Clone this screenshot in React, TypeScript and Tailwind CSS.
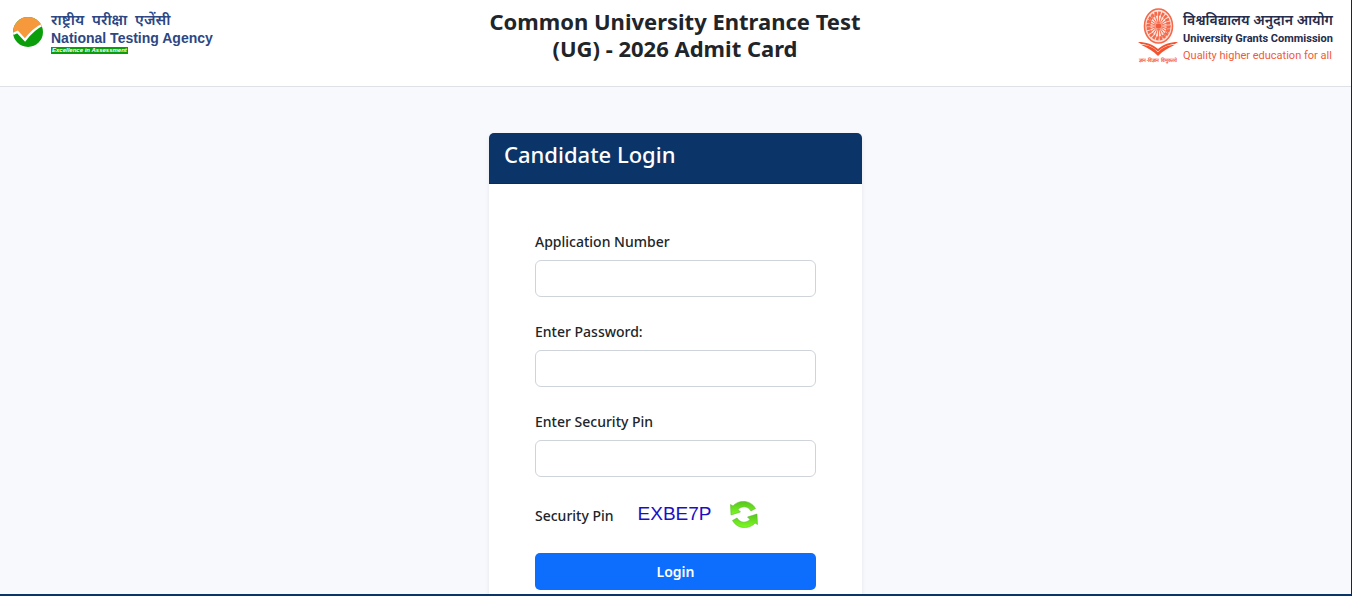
import { useState } from 'react';

const fields = [
  { id: 'applicationNumber', label: 'Application Number', type: 'text' },
  { id: 'password', label: 'Enter Password:', type: 'password' },
  { id: 'securityPin', label: 'Enter Security Pin', type: 'text' },
];

const spokes = Array.from({ length: 20 }, (_, i) => i * 18);

function NtaLogo() {
  return (
    <div className="flex items-start gap-2 font-['Liberation_Sans',sans-serif]">
      <svg className="mt-1 h-[30px] w-[30px] shrink-0" viewBox="0 0 30 30" aria-hidden="true">
        <defs>
          <clipPath id="ntaDisc">
            <circle cx="15" cy="15" r="15" />
          </clipPath>
        </defs>
        <g clipPath="url(#ntaDisc)">
          <path d="M0 0H30V30H0Z" fill="#0a9f0a" />
          <path d="M0 0H30V7.5C22 11 17 16.5 12 23L4.5 15L0 17Z" fill="#f6983c" />
          <path d="M0 17L4.5 15L12 23C17 16.5 22 11 30 7.5" fill="none" stroke="#fff" strokeWidth="2.4" />
        </g>
      </svg>
      <div className="flex flex-col items-start text-[#2c4784]">
        <span className="pt-px font-['Noto_Sans_Devanagari','Noto_Sans',sans-serif] text-[15px] leading-[16px] font-semibold whitespace-nowrap" lang="hi">
          राष्ट्रीय &nbsp;परीक्षा &nbsp;एजेंसी
        </span>
        <span className="text-[14px] leading-[16px] font-bold whitespace-nowrap">National Testing Agency</span>
        <span className="mt-px bg-[#0a9f0a] px-px text-[6px] leading-[7px] font-bold italic text-white">
          Excellence in Assessment
        </span>
      </div>
    </div>
  );
}

function UgcLogo() {
  return (
    <div className="flex items-start gap-[5px] font-[Roboto,sans-serif]">
      <svg className="h-[56px] w-10 shrink-0" viewBox="0 0 40 56" aria-hidden="true">
        <ellipse cx="20.5" cy="18" rx="14" ry="17" fill="#fde3dc" stroke="#f4694a" strokeWidth="1.6" />
        <ellipse cx="20.5" cy="18" rx="10" ry="12.5" fill="none" stroke="#f4694a" strokeWidth="4" strokeDasharray="2.5 1" />
        {spokes.map((angle) => (
          <path key={angle} d="M20.5 15V5.5" stroke="#f4694a" strokeWidth="0.9" transform={`rotate(${angle} 20.5 18)`} />
        ))}
        <circle cx="20.5" cy="18" r="2.8" fill="#f15a3a" />
        <path d="M0 34C8 34 15 36.5 20 41C25 36.5 32 34 40 34L37 36C30 36.5 25 39 20 43.5C15 39 10 36.5 3 36Z" fill="#f4532f" />
        <path d="M3 36.8C11 37 16 40 20 44.3C24 40 29 37 37 36.8C30 40 25 43 20 48C15 43 10 40 3 36.8Z" fill="#f4532f" />
        <text x="20" y="54" fontSize="5" fontWeight="700" textAnchor="middle" fill="#f15a3a" lang="hi">
          ज्ञान-विज्ञान विमुक्तये
        </text>
      </svg>
      <div className="flex w-[154px] flex-col items-start pt-1 whitespace-nowrap text-[#262b4a]">
        <span className="font-['Noto_Sans_Devanagari','Noto_Sans',sans-serif] text-[14px] leading-[19px] font-semibold" lang="hi">
          विश्वविद्यालय अनुदान आयोग
        </span>
        <span className="text-[11px] leading-[16px] font-bold">University Grants Commission</span>
        <span className="text-[11px] leading-[18px] text-[#f15a3a]">Quality higher education for all</span>
      </div>
    </div>
  );
}

function RefreshIcon() {
  return (
    <svg className="h-[27px] w-[28px]" viewBox="0 0 28 27" aria-hidden="true">
      <defs>
        <linearGradient id="refreshGreen" x1="0" y1="0" x2="0" y2="1">
          <stop offset="0" stopColor="#58c51f" />
          <stop offset="1" stopColor="#7dfa22" />
        </linearGradient>
      </defs>
      <g fill="url(#refreshGreen)" stroke="#4cb51c" strokeWidth="0.5" strokeLinejoin="round">
        <path d="M0.5 3.5L3 5C8-1 20-2 25.5 7.5L21 10C18 5 12 4.5 8 8.5L10.5 11L1 14Z" />
        <path d="M27.5 23.5L25 22C20 28 8 29 2.5 19.5L7 17C10 22 16 22.5 20 18.5L17.5 16L27 13Z" />
      </g>
    </svg>
  );
}

export default function App() {
  const [values, setValues] = useState<Record<string, string>>({});

  return (
    <div className="flex h-screen flex-col overflow-hidden border-r border-[#212529] bg-[#f8f9fc] font-['Noto_Sans',sans-serif] text-[#212529]">
      {/* Header */}
      <header className="grid shrink-0 grid-cols-[1fr_auto_1fr] items-start border-b border-[#dee2e6] bg-white pt-2 pr-[14px] pb-[21px] pl-[13px]">
        <div className="flex pt-[5px]">
          <NtaLogo />
        </div>
        <h1 className="w-[400px] text-center text-[22px] leading-[27px] font-bold">
          Common University Entrance Test (UG) - 2026 Admit Card
        </h1>
        <div className="flex justify-end">
          <UgcLogo />
        </div>
      </header>

      {/* Login card */}
      <main className="min-h-0 flex-1 overflow-hidden px-4 pt-[46px]">
        <section className="mx-auto max-w-[373px] rounded-t-[5px] bg-white shadow-[0_2px_4px_rgba(0,0,0,0.08)]">
          <div className="rounded-t-[5px] border-b border-[#0a2c5a] bg-[#0b3468] px-[15px] pt-[7px] pb-[15px]">
            <h2 className="text-[22px] leading-[28px] font-medium text-white">Candidate Login</h2>
          </div>
          <form className="px-[46px] pt-[47px] pb-12" onSubmit={(e) => e.preventDefault()}>
            {fields.map((field) => (
              <div key={field.id} className="mb-6">
                <label htmlFor={field.id} className="mb-2 block text-[14px] leading-[21px] font-medium">
                  {field.label}
                </label>
                <input
                  id={field.id}
                  type={field.type}
                  value={values[field.id] ?? ''}
                  onChange={(e) => setValues({ ...values, [field.id]: e.target.value })}
                  className="block h-[37px] w-full rounded-md border border-[#ced4da] bg-white px-3 text-[14px]"
                />
              </div>
            ))}
            <div className="mb-[26px] flex h-[26px] items-center">
              <span className="pt-[3px] text-[14px] leading-[21px] font-medium">Security Pin</span>
              <span className="ml-6 font-['Liberation_Sans',sans-serif] text-[19px] leading-[26px] text-[#1a0fc8]">
                EXBE7P
              </span>
              <button type="button" aria-label="Refresh security pin" className="ml-[18px]">
                <RefreshIcon />
              </button>
            </div>
            <button
              type="submit"
              className="block h-[37px] w-full rounded-[5px] bg-[#0d6efd] text-[14px] font-semibold text-white"
            >
              Login
            </button>
          </form>
        </section>
      </main>

      <footer className="h-[2px] shrink-0 bg-[#0b3468]" />
    </div>
  );
}
